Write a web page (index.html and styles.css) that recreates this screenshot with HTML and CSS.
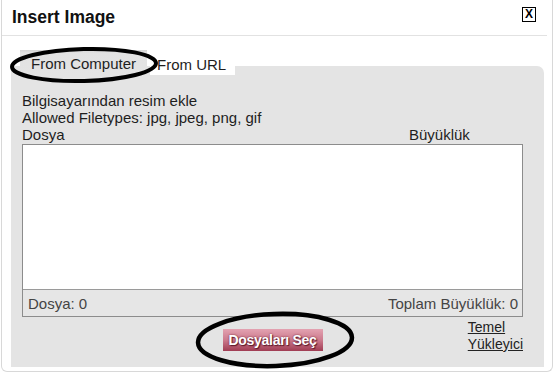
FILE: index.html
```html
<!DOCTYPE html>
<html lang="tr">
<head>
<meta charset="utf-8">
<title>Insert Image</title>
<link rel="stylesheet" href="styles.css">
</head>
<body>
<div class="dialog">
  <div class="header">
    <span class="title">Insert Image</span>
    <span class="close">X</span>
  </div>
  <div class="content">
    <div class="tabs">
      <div class="tab active">From Computer</div>
      <div class="tab">From URL</div>
    </div>
    <div class="panel">
      <div class="line">Bilgisayarından resim ekle</div>
      <div class="line">Allowed Filetypes: jpg, jpeg, png, gif</div>
      <div class="cols line"><span>Dosya</span><span>Büyüklük</span></div>
      <div class="filebox">
        <div class="list"></div>
        <div class="footer"><span>Dosya: 0</span><span>Toplam Büyüklük: 0</span></div>
      </div>
      <div class="actions">
        <span></span>
        <span class="button">Dosyaları Seç</span>
        <a class="basic">Temel<br>Yükleyici</a>
      </div>
    </div>
  </div>
  <svg class="marks" width="556" height="374" viewBox="0 0 556 374">
    <ellipse cx="84" cy="65" rx="72" ry="16" transform="rotate(-1.5 84 65)" fill="none" stroke="#000" stroke-width="4"/>
    <ellipse cx="275" cy="340" rx="77" ry="26" transform="rotate(-2 275 340)" fill="none" stroke="#000" stroke-width="4.5"/>
  </svg>
</div>
</body>
</html>
```
FILE: styles.css
```css
html, body {
  margin: 0;
  padding: 0;
  background: #fff;
}
body {
  font-family: "Liberation Sans", Arial, sans-serif;
  font-size: 15px;
  color: #1e1e1e;
}
.dialog {
  position: relative;
  margin-left: 1px;
  width: 550px;
  height: 371px;
  border: 1px solid #d8d8d8;
  border-top: none;
  border-radius: 0 0 6px 6px;
}
.header {
  height: 35px;
  margin-right: 5px;
  border-bottom: 1px solid #e2e2e2;
  display: flex;
  align-items: center;
  justify-content: space-between;
  padding: 0 11px 0 10px;
}
.title {
  font-weight: bold;
  font-size: 17.5px;
  color: #111;
}
.close {
  box-sizing: border-box;
  width: 14px;
  height: 15px;
  border: 1px solid #000;
  font-weight: bold;
  font-size: 12px;
  line-height: 13px;
  text-align: center;
  color: #000;
  margin-top: -6px;
}
.content {
  padding: 14px 7px 0 9px;
}
.tabs {
  display: flex;
  align-items: flex-end;
  padding-left: 9px;
  margin-bottom: -9px;
  position: relative;
  z-index: 1;
}
.tab {
  box-sizing: border-box;
  height: 20px;
  width: 85px;
  margin-left: 3px;
  padding: 1px 0 0 7px;
  background: #fff;
  line-height: 17px;
}
.tab.active {
  height: 25px;
  width: 127px;
  margin-left: 0;
  padding: 5px 0 0 11px;
  background: linear-gradient(#d4d4d4, #e2e2e2 3px, #e4e4e4);
}
.panel {
  box-sizing: border-box;
  width: 533px;
  height: 301px;
  background: #e4e4e4;
  border-top-right-radius: 7px;
  padding: 26px 21px 0 11px;
}
.line {
  line-height: 17px;
}
.cols {
  display: grid;
  grid-template-columns: 1fr 114px;
}
.filebox {
  margin-top: 1px;
  border: 1px solid #8c8c8c;
  height: 171px;
  display: flex;
  flex-direction: column;
}
.list {
  height: 144px;
  background: #fff;
}
.footer {
  flex: 1;
  border-top: 1px solid #9a9a9a;
  background: #e6e6e6;
  display: flex;
  justify-content: space-between;
  align-items: center;
  padding: 0 4px 0 5px;
  color: #444;
}
.actions {
  display: grid;
  grid-template-columns: 1fr auto 1fr;
}
.button {
  margin-top: 12px;
  box-sizing: border-box;
  width: 100px;
  height: 22px;
  background: linear-gradient(#e3a2b1, #cc7a8d 50%, #a03c53);
  color: #fff;
  font-weight: bold;
  font-size: 14px;
  line-height: 22px;
  text-align: center;
  text-shadow: 0 0 2px #6a1f30, 1px 1px 1px #5a1a28;
  letter-spacing: -0.3px;
  white-space: nowrap;
}
.basic {
  justify-self: end;
  margin-top: 2px;
  font-size: 14px;
  line-height: 17px;
  color: #222;
  text-decoration: underline;
}
.marks {
  position: absolute;
  left: -2px;
  top: 0;
  z-index: 2;
  pointer-events: none;
}
```
